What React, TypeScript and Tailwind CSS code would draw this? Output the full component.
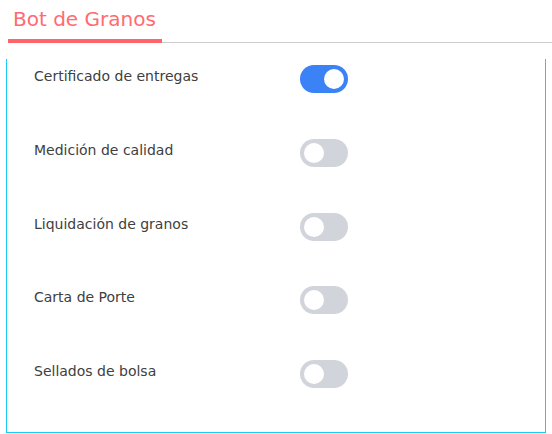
import React, { useState } from "react";

const items: { label: string; on: boolean }[] = [
  { label: "Certificado de entregas", on: true },
  { label: "Medición de calidad", on: false },
  { label: "Liquidación de granos", on: false },
  { label: "Carta de Porte", on: false },
  { label: "Sellados de bolsa", on: false },
];

function Toggle({ on, onClick }: { on: boolean; onClick: () => void }) {
  return (
    <button
      onClick={onClick}
      className={
        "flex h-[28px] w-[48px] shrink-0 items-center rounded-full px-[4px] " +
        (on ? "justify-end bg-[#3b82f6]" : "justify-start bg-[#d1d5db]")
      }
    >
      <span className="block h-[20px] w-[20px] rounded-full bg-white" />
    </button>
  );
}

export default function App() {
  const [state, setState] = useState(items.map((i) => i.on));
  return (
    <div
      className="h-[434px] w-[552px] bg-white"
      style={{ fontFamily: '"DejaVu Sans", "Noto Sans", sans-serif' }}
    >
      <div className="ml-[8px] flex border-b border-[#cccccc] pt-[6px]">
        <div className="-mb-px w-[154px] border-b-4 border-[#ff646b] px-[5px] pb-[6px]">
          <span className="text-[20px] leading-[27px] text-[#ff6b70]">Bot de Granos</span>
        </div>
      </div>
      <div className="mx-[6px] mt-[16px] h-[374px] border-x border-b border-[#1ecbf0] pl-[27px] pt-[6px]">
        {items.map((it, i) => (
          <div key={it.label} className="flex h-[73.75px] items-start">
            <div className="w-[266px] pt-[1px] text-[14px] leading-[20px] text-[#404040]">
              {it.label}
            </div>
            <Toggle
              on={state[i]}
              onClick={() => setState((s) => s.map((v, j) => (j === i ? !v : v)))}
            />
          </div>
        ))}
      </div>
    </div>
  );
}
